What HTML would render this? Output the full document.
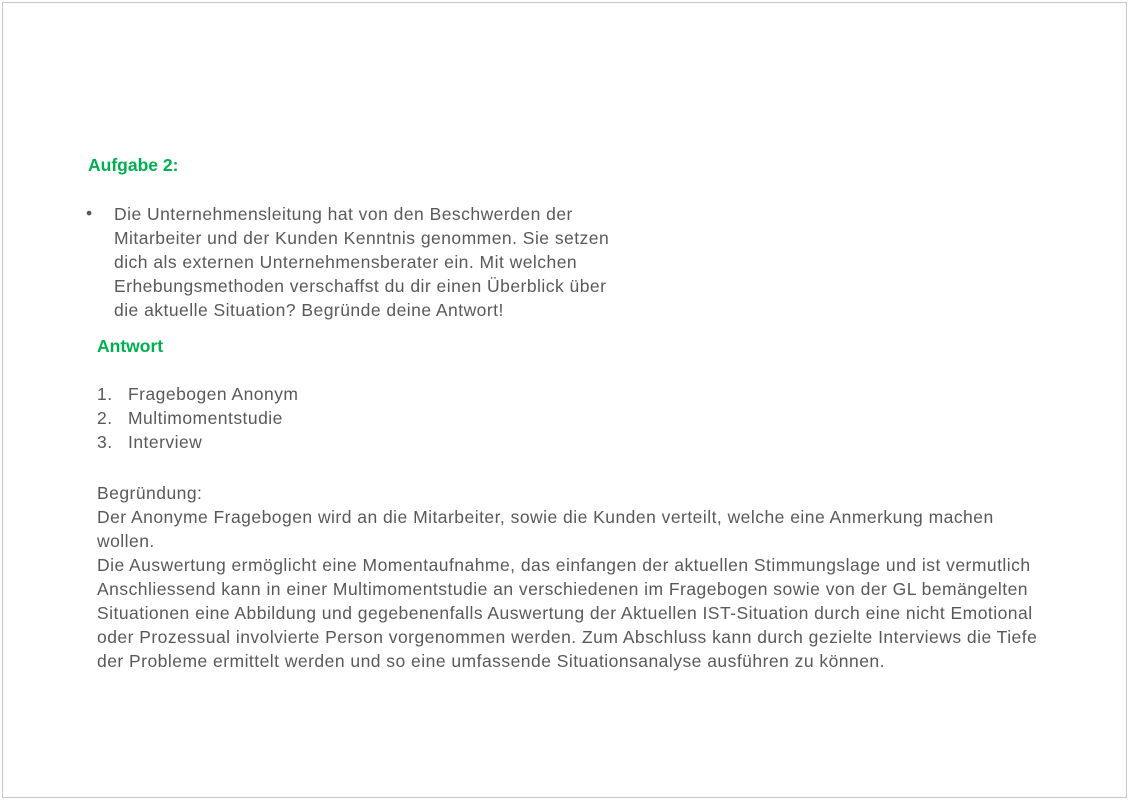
<!DOCTYPE html>
<html><head><meta charset="utf-8"><style>
body{margin:0;width:1128px;height:800px;background:#fff;position:relative;overflow:hidden;font-family:"Liberation Sans",sans-serif;}
.frame{position:absolute;left:2px;top:2px;width:1123px;height:794px;border:1px solid #c8c8c8;}
.l{position:absolute;white-space:nowrap;font-size:17.5px;color:#595959;line-height:20px;letter-spacing:0.47px;}
.g{color:#00b050;font-weight:bold;letter-spacing:0;}
</style></head><body>
<div class="frame"></div>
<div class="l g" style="left:88px;top:155px;">Aufgabe 2:</div>
<div class="l" style="left:86px;top:203px;">•</div>
<div class="l" style="left:114px;top:204px;">Die Unternehmensleitung hat von den Beschwerden der</div>
<div class="l" style="left:114px;top:228px;">Mitarbeiter und der Kunden Kenntnis genommen. Sie setzen</div>
<div class="l" style="left:114px;top:252px;">dich als externen Unternehmensberater ein. Mit welchen</div>
<div class="l" style="left:114px;top:276px;">Erhebungsmethoden verschaffst du dir einen Überblick über</div>
<div class="l" style="left:114px;top:300px;">die aktuelle Situation? Begründe deine Antwort!</div>
<div class="l g" style="left:97px;top:336px;">Antwort</div>
<div class="l" style="left:97px;top:384px;">1.</div><div class="l" style="left:128px;top:384px;">Fragebogen Anonym</div>
<div class="l" style="left:97px;top:408px;">2.</div><div class="l" style="left:128px;top:408px;">Multimomentstudie</div>
<div class="l" style="left:97px;top:432px;">3.</div><div class="l" style="left:128px;top:432px;">Interview</div>
<div class="l" style="left:97px;top:483px;">Begründung:</div>
<div class="l" style="left:97px;top:507px;">Der Anonyme Fragebogen wird an die Mitarbeiter, sowie die Kunden verteilt, welche eine Anmerkung machen</div>
<div class="l" style="left:97px;top:531px;">wollen.</div>
<div class="l" style="left:97px;top:555px;">Die Auswertung ermöglicht eine Momentaufnahme, das einfangen der aktuellen Stimmungslage und ist vermutlich</div>
<div class="l" style="left:97px;top:579px;">Anschliessend kann in einer Multimomentstudie an verschiedenen im Fragebogen sowie von der GL bemängelten</div>
<div class="l" style="left:97px;top:603px;">Situationen eine Abbildung und gegebenenfalls Auswertung der Aktuellen IST-Situation durch eine nicht Emotional</div>
<div class="l" style="left:97px;top:627px;">oder Prozessual involvierte Person vorgenommen werden. Zum Abschluss kann durch gezielte Interviews die Tiefe</div>
<div class="l" style="left:97px;top:651px;">der Probleme ermittelt werden und so eine umfassende Situationsanalyse ausführen zu können.</div>
</body></html>
